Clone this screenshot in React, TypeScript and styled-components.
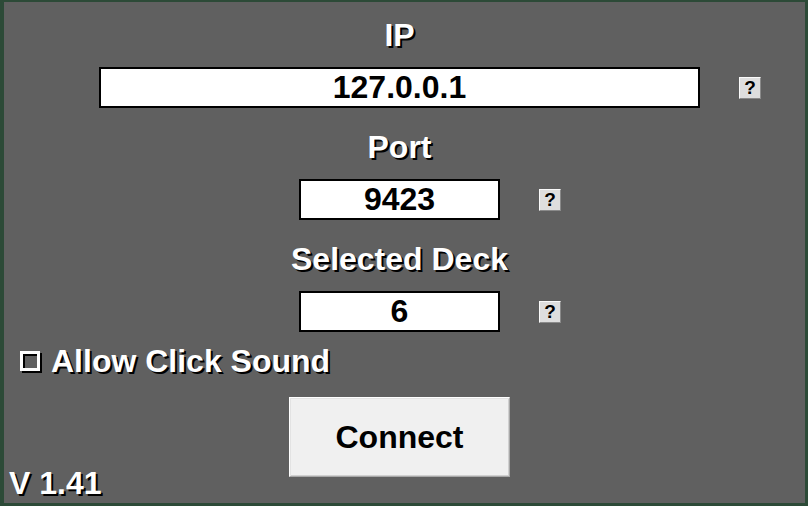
import * as React from "react";
import styled, { createGlobalStyle } from "styled-components";

const GlobalStyle = createGlobalStyle`
  html, body {
    margin: 0;
    padding: 0;
    background: #2c4a37;
  }
  * {
    box-sizing: border-box;
  }
`;

const Frame = styled.div`
  width: 808px;
  height: 506px;
  border-style: solid;
  border-color: #2c4a37;
  border-width: 2px 3px 3px 4px;
  background: #606060;
  padding: 15px 10px 0 0;
  display: flex;
  flex-direction: column;
  font-family: "Liberation Sans", Arial, sans-serif;
  font-weight: bold;
  font-size: 32px;
  line-height: 36px;
  overflow: hidden;
`;

const Label = styled.div<{ $gap?: number }>`
  text-align: center;
  color: #fff;
  text-shadow: 2px 2px 0 #000;
  margin-top: ${(p) => p.$gap ?? 0}px;
`;

const FieldRow = styled.div`
  display: grid;
  grid-template-columns: 1fr auto 1fr;
  align-items: center;
  margin-top: 14px;
`;

const ValueBox = styled.div<{ $width: number }>`
  grid-column: 2;
  width: ${(p) => p.$width}px;
  height: 41px;
  border: 2px solid #000;
  background: #fff;
  color: #000;
  text-align: center;
  line-height: 37px;
`;

const HelpButton = styled.button`
  grid-column: 3;
  justify-self: start;
  margin-left: 39px;
  width: 22px;
  height: 22px;
  padding: 0;
  border: 1px solid;
  border-color: #fafafa #8a8a8a #8a8a8a #fafafa;
  background: #dedede;
  color: #000;
  font-family: "Liberation Sans", Arial, sans-serif;
  font-weight: bold;
  font-size: 19px;
  line-height: 20px;
  text-align: center;
`;

const CheckRow = styled.label`
  display: flex;
  align-items: center;
  gap: 11px;
  margin: 11px 0 0 16px;
  color: #fff;
  text-shadow: 2px 2px 0 #000;
`;

const CheckBox = styled.span`
  width: 20px;
  height: 20px;
  border: 3px solid #fff;
  filter: drop-shadow(2px 2px 0 #000);
  flex: none;
`;

const BottomRow = styled.div`
  display: grid;
  grid-template-columns: 1fr auto 1fr;
  align-items: end;
  margin-top: 18px;
`;

const Version = styled.div`
  justify-self: start;
  padding-left: 5px;
  color: #fff;
  text-shadow: 2px 2px 0 #000;
`;

const ConnectButton = styled.button`
  width: 221px;
  height: 80px;
  margin-bottom: 24px;
  border: 1px solid;
  border-color: #ffffff #a8a8a8 #a8a8a8 #ffffff;
  box-shadow: inset 1px 1px 0 #e3e3e3, inset -1px -1px 0 #d0d0d0;
  background: #f0f0f0;
  color: #000;
  font-family: "Liberation Sans", Arial, sans-serif;
  font-weight: bold;
  font-size: 32px;
`;

function Field({ label, value, width, gap }: { label: string; value: string; width: number; gap?: number }) {
  return (
    <>
      <Label $gap={gap}>{label}</Label>
      <FieldRow>
        <ValueBox $width={width}>{value}</ValueBox>
        <HelpButton>?</HelpButton>
      </FieldRow>
    </>
  );
}

export default function App() {
  return (
    <>
      <GlobalStyle />
      <Frame>
        <Field label="IP" value="127.0.0.1" width={601} />
        <Field label="Port" value="9423" width={201} gap={21} />
        <Field label="Selected Deck" value="6" width={201} gap={21} />
        <CheckRow>
          <CheckBox />
          Allow Click Sound
        </CheckRow>
        <BottomRow>
          <Version>V 1.41</Version>
          <ConnectButton>Connect</ConnectButton>
        </BottomRow>
      </Frame>
    </>
  );
}
